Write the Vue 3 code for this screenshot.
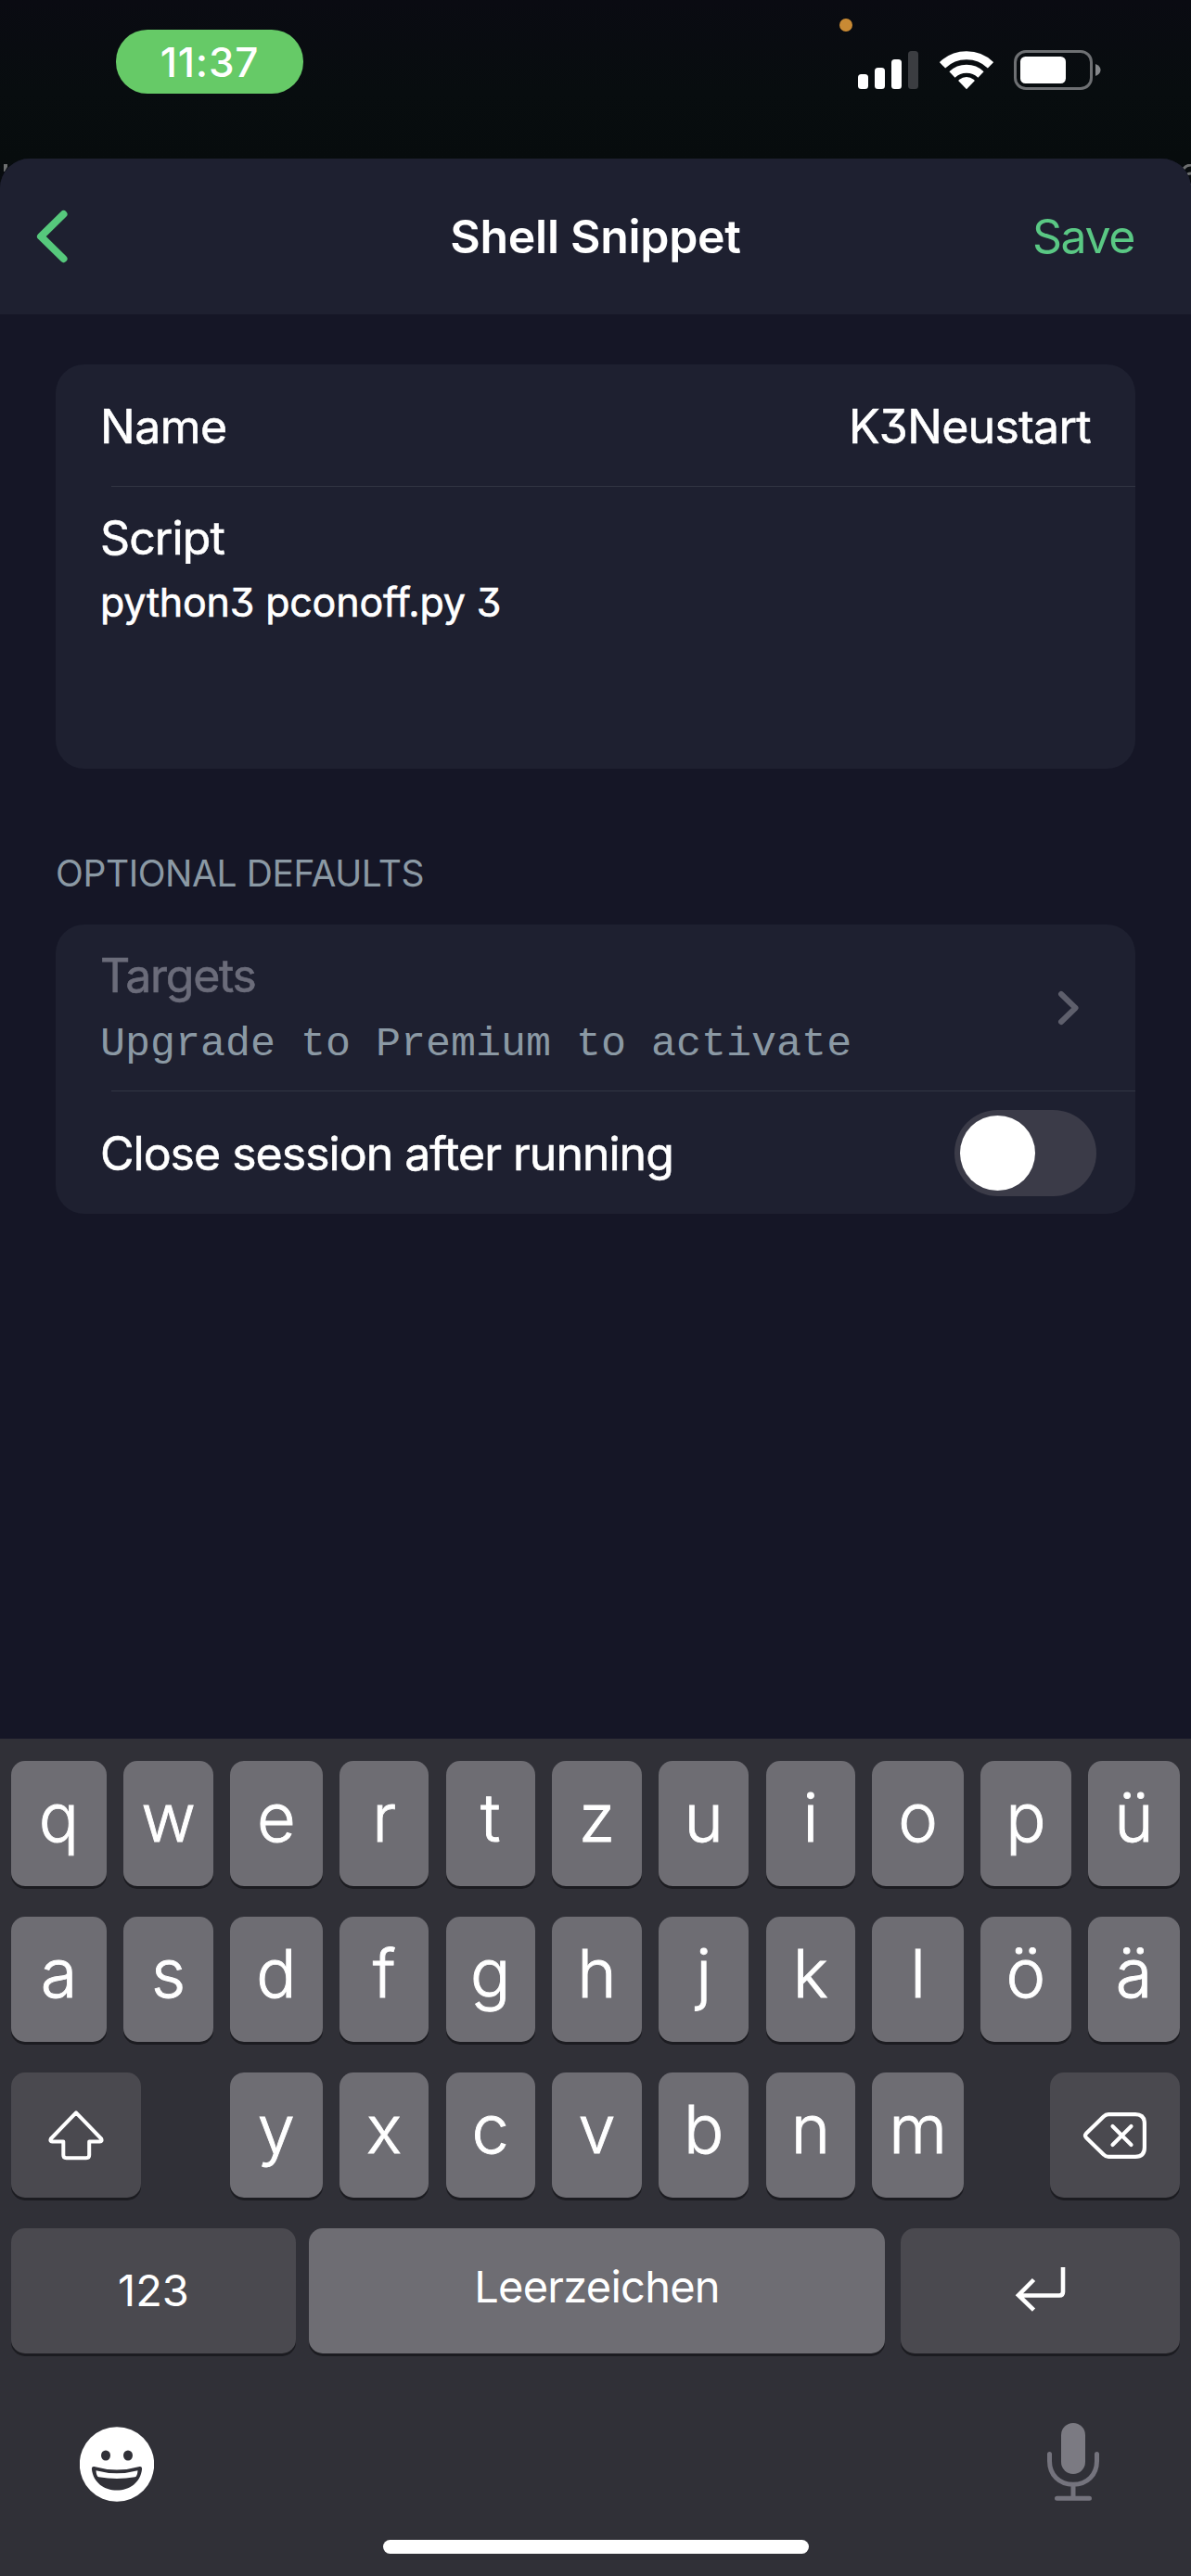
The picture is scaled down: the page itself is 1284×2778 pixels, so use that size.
<script setup>
const letterRows = ['qwertzuiopü'.split(''), 'asdfghjklöä'.split('')]
const thirdRow = 'yxcvbnm'.split('')
</script>

<template>
  <div class="screen">
    <header class="status">
      <div class="clock"><span>11:37</span></div>
      <i class="rec-dot"></i>
      <div class="indicators">
        <svg class="signal" width="65" height="43" viewBox="0 0 65 43">
          <rect x="0" y="26" width="11" height="16" rx="3.5" fill="#fff" />
          <rect x="18" y="19" width="11" height="23" rx="3.5" fill="#fff" />
          <rect x="36" y="10" width="11" height="32" rx="3.5" fill="#fff" />
          <rect x="54" y="1" width="11" height="41" rx="3.5" fill="#3b3d41" />
        </svg>
        <svg class="wifi" width="58" height="43" viewBox="0 0 58 43">
          <g fill="none" stroke="#fff" stroke-width="9">
            <path d="M3 16.3a37.5 37.5 0 0 1 52 0" />
            <path d="M13.5 26.4a22.6 22.6 0 0 1 31 0" />
          </g>
          <path d="M29 42.3 20.6 33.6Q20 32.800 20.900 32.100Q29 26 37.100 32.100Q38 32.800 37.400 33.600Z" fill="#fff" />
        </svg>
        <svg width="94" height="43" viewBox="0 0 94 43">
          <rect x="1.500" y="1.500" width="82" height="40" rx="11.500" fill="none" stroke="#6e7073" stroke-width="3" />
          <rect x="7" y="7" width="49" height="29" rx="5.500" fill="#fff" />
          <path d="M88 15c7.400 2.600 7.400 10.400 0 13z" fill="#85878a" />
        </svg>
      </div>
    </header>

    <svg class="peek left" width="6" height="8" viewBox="0 0 6 8"><path d="M0 0h4v3L1 8H0z" fill="#6d6f70" /></svg>
    <svg class="peek right" width="10" height="26" viewBox="0 0 10 26">
      <path d="M2 5q3-4 8-4M6 11q2-1 4-1M8 22l2 1" fill="none" stroke="#6d6f70" stroke-width="3" />
    </svg>

    <main class="sheet">
      <nav class="nav">
        <svg width="34" height="58" viewBox="0 0 34 58">
          <path d="M29.500 5 5 29l24.500 24" fill="none" stroke="#56c87c" stroke-width="8" stroke-linecap="round" stroke-linejoin="round" />
        </svg>
        <h1>Shell Snippet</h1>
        <span class="save">Save</span>
      </nav>

      <section class="card first">
        <div class="row">
          <span class="label name">Name</span>
          <span class="label value">K3Neustart</span>
        </div>
        <hr>
        <div class="script">
          <div class="label script-label">Script</div>
          <div class="code">python3 pconoff.py 3</div>
        </div>
      </section>

      <h2>OPTIONAL DEFAULTS</h2>

      <section class="card">
        <div class="row targets">
          <div>
            <div class="label muted">Targets</div>
            <div class="upgrade">Upgrade to Premium to activate</div>
          </div>
          <svg width="24" height="38" viewBox="0 0 24 38">
            <path d="M4 4l15.500 15L4 34" fill="none" stroke="#5e5f6c" stroke-width="6" stroke-linecap="round" stroke-linejoin="round" />
          </svg>
        </div>
        <hr>
        <div class="row close">
          <span class="label close-label">Close session after running</span>
          <div class="toggle"><i></i></div>
        </div>
      </section>
    </main>

    <footer class="keyboard">
      <div v-for="(row, i) in letterRows" :key="i" class="keys">
        <div v-for="k in row" :key="k" class="key letter">{{ k }}</div>
      </div>
      <div class="keys">
        <div class="key dark shift">
          <svg width="62" height="56" viewBox="0 0 62 56">
            <path d="M31 3.300 58.200 31.500q1.200 2.900-1.400 2.900H45.200V49q0 3.200-3.200 3.200H20.500q-3.200 0-3.200-3.200V34.400H5.200q-2.600 0-1.400-2.900z" fill="none" stroke="#fff" stroke-width="4" stroke-linejoin="round" />
          </svg>
        </div>
        <div v-for="k in thirdRow" :key="k" class="key letter">{{ k }}</div>
        <div class="key dark delete">
          <svg width="70" height="52" viewBox="0 0 70 52">
            <g fill="none" stroke="#fff" stroke-width="4.200" stroke-linecap="round" stroke-linejoin="round">
              <path d="M28 3.100h29q9.900 0 9.900 9.900v26q0 9.900-9.900 9.900H28q-3 0-5-2.200L4 28.200q-2-2.200 0-4.400L23 5.300q2-2.200 5-2.200z" />
              <path d="M32.500 16 52.500 36M52.500 16 32.500 36" />
            </g>
          </svg>
        </div>
      </div>
      <div class="bottom-keys">
        <div class="key dark numbers">123</div>
        <div class="key space">Leerzeichen</div>
        <div class="key dark return">
          <svg width="58" height="50" viewBox="0 0 58 50">
            <path d="M54 2v26.500q0 4-4 4H6M22.500 15.500 6 32.200l16.500 15.900" fill="none" stroke="#fff" stroke-width="4.600" />
          </svg>
        </div>
      </div>
      <div class="tools">
        <svg width="80" height="81" viewBox="0 0 80 81">
          <circle cx="40" cy="40.500" r="40.200" fill="#fff" />
          <ellipse cx="28" cy="31" rx="5" ry="5.600" fill="#303037" />
          <ellipse cx="52" cy="31" rx="5" ry="5.600" fill="#303037" />
          <path d="M15.500 43q24.500 7 49 0 2.800-.6 2.600 2.500C65.500 60.500 53.500 68.500 40 68.500S14.500 60.500 12.900 45.500q-.2-3.100 2.600-2.500z" fill="#303037" />
          <path d="M17.500 47.300q22.500 6 45 0-.4 6.500-3 7-19.500 3.200-39 0-2.600-.5-3-7z" fill="#fff" />
        </svg>
        <svg width="58" height="84" viewBox="0 0 58 84">
          <rect x="16" y="0" width="26" height="55" rx="13" fill="#7b7a82" />
          <g fill="none" stroke="#74737d" stroke-width="5" stroke-linecap="round">
            <path d="M3.500 33.500V41C3.500 56 14 66.300 29 66.300S54.500 56 54.500 41v-7.500" />
            <path d="M29 67v14M11.500 81.300h35" />
          </g>
        </svg>
      </div>
      <div class="home"></div>
    </footer>
  </div>
</template>

<style>
body {
  margin: 0;
  background: #141626;
}
</style>

<style scoped>
.screen {
  position: relative;
  display: flex;
  flex-direction: column;
  width: 1284px;
  height: 2778px;
  overflow: hidden;
  background: linear-gradient(#0a0b12 0, #080d0f 100px, #070c0d 171px, #0a0b12 220px);
  color: #fff;
  font-family: Inter, "Liberation Sans", sans-serif;
}
svg {
  display: block;
  flex: none;
}
.status {
  position: relative;
  display: flex;
  justify-content: space-between;
  align-items: flex-start;
  height: 171px;
  box-sizing: border-box;
  padding: 32px 97px 0 125px;
}
.clock {
  display: flex;
  align-items: center;
  justify-content: center;
  width: 202px;
  height: 69px;
  border-radius: 34px;
  background: #66ca67;
  font-size: 44px;
  font-weight: 500;
  letter-spacing: 0.8px;
}
.rec-dot {
  position: absolute;
  left: 905px;
  top: 20px;
  width: 14px;
  height: 14px;
  border-radius: 50%;
  background: #c98a34;
}
.indicators {
  display: flex;
  padding-top: 22px;
}
.wifi {
  margin: 0 22px 0 23px;
}
.peek {
  position: absolute;
}
.peek.left {
  left: 4px;
  top: 177px;
}
.peek.right {
  right: 0;
  top: 177px;
}
.sheet {
  position: relative;
  height: 1704px;
  border-radius: 32px 32px 0 0;
  overflow: hidden;
  background: #151626;
}
.nav {
  display: grid;
  grid-template-columns: 1fr auto 1fr;
  align-items: center;
  height: 168px;
  box-sizing: border-box;
  padding: 0 61px 0 39px;
  background: #1e2030;
}
.nav h1 {
  margin: 0 0 0 22px;
  font-size: 50px;
  font-weight: 600;
  line-height: 60px;
  letter-spacing: -0.3px;
}
.save {
  justify-self: end;
  color: #5ac884;
  font-size: 50px;
  letter-spacing: -1.4px;
}
.card {
  margin: 0 60px;
  border-radius: 31px;
  background: #1e2030;
}
.card.first {
  height: 436px;
  margin-top: 54px;
}
hr {
  height: 1px;
  margin: 0 0 0 60px;
  border: 0;
  background: #323543;
}
.row {
  display: flex;
  align-items: center;
  justify-content: space-between;
  height: 131px;
  padding: 0 48px;
}
.label {
  font-size: 50px;
  line-height: 60px;
  letter-spacing: -0.5px;
  white-space: nowrap;
  font-feature-settings: "cv09";
  -webkit-text-stroke: 0.6px currentColor;
}
.name,
.value {
  padding-top: 2px;
}
.value {
  letter-spacing: -0.7px;
}
.script {
  padding: 25px 48px 0;
}
.script-label {
  letter-spacing: -0.9px;
}
.code {
  margin-top: 9px;
  font-size: 43px;
  line-height: 60px;
  letter-spacing: -0.2px;
  font-feature-settings: "cv09";
  -webkit-text-stroke: 0.6px currentColor;
}
h2 {
  margin: 88px 0 30px 60px;
  color: #8b99a4;
  font-size: 39px;
  font-weight: 400;
  line-height: 50px;
  letter-spacing: -0.42px;
}
.targets {
  height: 179px;
}
.targets svg {
  margin-right: 12px;
}
.muted {
  color: #6b6c7a;
  letter-spacing: -1.3px;
}
.upgrade {
  margin: 15px 0 -6px;
  color: #8b99a4;
  font-family: "Liberation Mono", monospace;
  font-size: 45px;
  line-height: 60px;
}
.close {
  padding: 1px 42px 0 48px;
}
.close-label {
  letter-spacing: -1px;
}
.toggle {
  width: 153px;
  height: 93px;
  box-sizing: border-box;
  padding: 6px;
  border-radius: 47px;
  background: #3b3b48;
}
.toggle i {
  display: block;
  width: 81px;
  height: 81px;
  border-radius: 50%;
  background: #fff;
}
.keyboard {
  height: 903px;
  box-sizing: border-box;
  padding: 24px 12px 0;
  background: #303037;
}
.keys {
  display: grid;
  grid-template-columns: 103px 96.5px 99.5px 96.5px 96px 97px 97px 96.5px 98.5px 97.5px 99px;
  justify-content: space-between;
  margin-bottom: 33px;
}
.key {
  display: flex;
  align-items: center;
  justify-content: center;
  height: 135px;
  box-sizing: border-box;
  border-radius: 15px;
  background: #6e6d73;
  box-shadow: 0 3px 0 #1c1c21;
}
.letter {
  padding: 0 0 14px;
  font-size: 72px;
  font-weight: 300;
  -webkit-text-stroke: 0.9px currentColor;
}
.dark {
  background: #4a494f;
}
.shift {
  grid-column: 1 / 3;
  width: 140px;
}
.shift svg {
  margin-right: 1px;
}
.delete {
  grid-column: 10 / 12;
  justify-self: end;
  width: 140px;
}
.bottom-keys {
  display: flex;
}
.numbers {
  width: 307px;
  padding-bottom: 2px;
  font-size: 47px;
}
.space {
  width: 621px;
  margin: 0 17px 0 14px;
  padding-bottom: 10px;
  font-size: 47px;
  letter-spacing: -0.75px;
}
.return {
  width: 301px;
  padding: 0 2px 5px 0;
}
.tools {
  display: flex;
  justify-content: space-between;
  padding: 75px 86px 0 74px;
}
.tools svg:first-child {
  margin-top: 4px;
}
.home {
  width: 459px;
  height: 15px;
  margin: 41px auto 0;
  border-radius: 8px;
  background: #fff;
}
</style>
